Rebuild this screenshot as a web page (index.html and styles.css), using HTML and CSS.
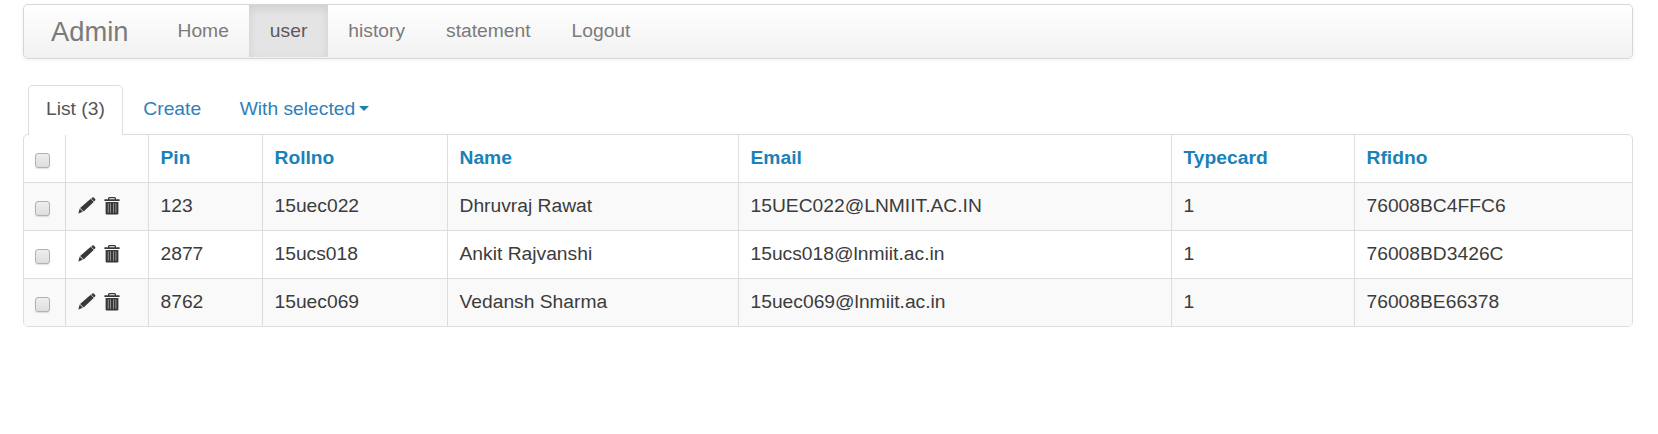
FILE: index.html
```html
<!DOCTYPE html>
<html lang="en">
<head>
<meta charset="utf-8">
<title>Admin - user</title>
<link rel="stylesheet" href="styles.css">
</head>
<body>
<svg width="0" height="0" class="defs">
  <symbol id="pencil" viewBox="0 0 18 17">
    <path d="M13.200 1.400 14.300.5q.8-.6 1.700.2l1 1.100q.8.9 0 1.700l-1 1zM12.700 1.800l3 3.200L5.600 14.500 2.100 10.900zM1.700 11.500l3.100 3.200L.3 16.500z"/>
  </symbol>
  <symbol id="trash" viewBox="0 0 16 18">
    <path d="M5 0h6l1 1v1.300h3.600V4H.4V2.300H4V1zM5.300 1.200v1.100h5.400V1.200zM1.600 5h12.800v11.600q0 1-1 1H2.600q-1 0-1-1zM3.900 6.300v9.500h.45V6.300zm2.600 0v9.500h.45V6.300zm2.600 0v9.500h.45V6.300zm2.600 0v9.500h.45V6.300z" fill-rule="evenodd"/>
  </symbol>
</svg>
<nav class="navbar">
  <a class="brand">Admin</a>
  <a class="nav-item">Home</a>
  <a class="nav-item active">user</a>
  <a class="nav-item">history</a>
  <a class="nav-item">statement</a>
  <a class="nav-item">Logout</a>
</nav>
<div class="tabs">
  <a class="tab current">List (3)</a>
  <a class="tab">Create</a>
  <a class="tab">With selected<span class="caret"></span></a>
</div>
<table class="list">
  <colgroup><col class="c-check"><col class="c-tools"><col class="c-pin"><col class="c-roll"><col class="c-name"><col class="c-email"><col class="c-type"><col></colgroup>
  <thead>
    <tr><th class="check"><input type="checkbox" class="box"></th><th></th><th>Pin</th><th>Rollno</th><th>Name</th><th>Email</th><th>Typecard</th><th>Rfidno</th></tr>
  </thead>
  <tbody>
    <tr><td class="check"><input type="checkbox" class="box"></td><td><div class="tools"><svg class="pencil"><use href="#pencil"/></svg><svg class="trash"><use href="#trash"/></svg></div></td><td>123</td><td>15uec022</td><td>Dhruvraj Rawat</td><td>15UEC022@LNMIIT.AC.IN</td><td>1</td><td>76008BC4FFC6</td></tr>
    <tr><td class="check"><input type="checkbox" class="box"></td><td><div class="tools"><svg class="pencil"><use href="#pencil"/></svg><svg class="trash"><use href="#trash"/></svg></div></td><td>2877</td><td>15ucs018</td><td>Ankit Rajvanshi</td><td>15ucs018@lnmiit.ac.in</td><td>1</td><td>76008BD3426C</td></tr>
    <tr><td class="check"><input type="checkbox" class="box"></td><td><div class="tools"><svg class="pencil"><use href="#pencil"/></svg><svg class="trash"><use href="#trash"/></svg></div></td><td>8762</td><td>15uec069</td><td>Vedansh Sharma</td><td>15uec069@lnmiit.ac.in</td><td>1</td><td>76008BE66378</td></tr>
  </tbody>
</table>
</body>
</html>
```
FILE: styles.css
```css
* { box-sizing: border-box; }
body {
  margin: 0;
  padding: 4px 25px 0 23px;
  height: 434px;
  overflow: hidden;
  background: #fff;
  color: #3c3c3c;
  font: 19.25px/27px "Liberation Sans", Arial, sans-serif;
}
.defs { display: block; position: absolute; }
.navbar {
  display: flex;
  height: 55px;
  border: 1px solid #d6d6d6;
  border-radius: 5px;
  background: linear-gradient(#fff, #f1f1f1);
  box-shadow: 0 1px 4px rgba(0, 0, 0, .06);
  color: #7b7b7b;
}
.brand {
  width: 133px;
  padding: 13px 0 0 27px;
  font-size: 27.3px;
  line-height: 27px;
}
.nav-item { padding: 12px 20.5px 0; }
.active {
  margin-bottom: 1px;
  background: #e4e4e4;
  color: #5a5a5a;
  box-shadow: inset 0 4px 10px rgba(0, 0, 0, .09);
}
.tabs {
  display: flex;
  gap: 2px;
  height: 49px;
  margin-top: 26px;
  padding-left: 5px;
}
.tab {
  height: 49px;
  padding: 10px 18px 0 18.5px;
  color: #2f7fba;
}
.current {
  position: relative;
  z-index: 1;
  height: 50px;
  padding: 9px 17px 0;
  border: 1px solid #ddd;
  border-bottom: 0;
  border-radius: 5px 5px 0 0;
  background: #fff;
  color: #555;
}
.caret {
  display: inline-block;
  margin-left: 4px;
  vertical-align: 4px;
  border: 5px solid transparent;
  border-top-color: #1b82ae;
  border-bottom: 0;
}
.list {
  width: 1610px;
  border: 1px solid #ddd;
  border-radius: 5px;
  border-spacing: 0;
  table-layout: fixed;
  overflow: hidden;
}
.list th, .list td {
  padding: 0 0 2px 11.5px;
  border-left: 1px solid #ddd;
  text-align: left;
  vertical-align: middle;
}
.list th { height: 47px; color: #1a82b8; }
.list td { height: 48px; border-top: 1px solid #ddd; }
.list .check { border-left: 0; padding: 4px 0 0 11px; }
.list tbody tr:nth-child(odd) td { background: #f9f9f9; }
.c-check { width: 41px; }
.c-tools { width: 83px; }
.c-pin { width: 114px; }
.c-roll { width: 185px; }
.c-name { width: 291px; }
.c-email { width: 433px; }
.c-type { width: 183px; }
.box {
  appearance: none;
  display: block;
  width: 15px;
  height: 15px;
  margin: 0;
  border: 1.5px solid #b0b0b0;
  border-radius: 3px;
  background: linear-gradient(#eee, #dedede);
  box-shadow: 0 1px 1px rgba(0, 0, 0, .12);
}
.tools { display: flex; gap: 8px; align-items: center; fill: #383838; }
.pencil { width: 18px; height: 17px; }
.trash { width: 16px; height: 18px; }
```
